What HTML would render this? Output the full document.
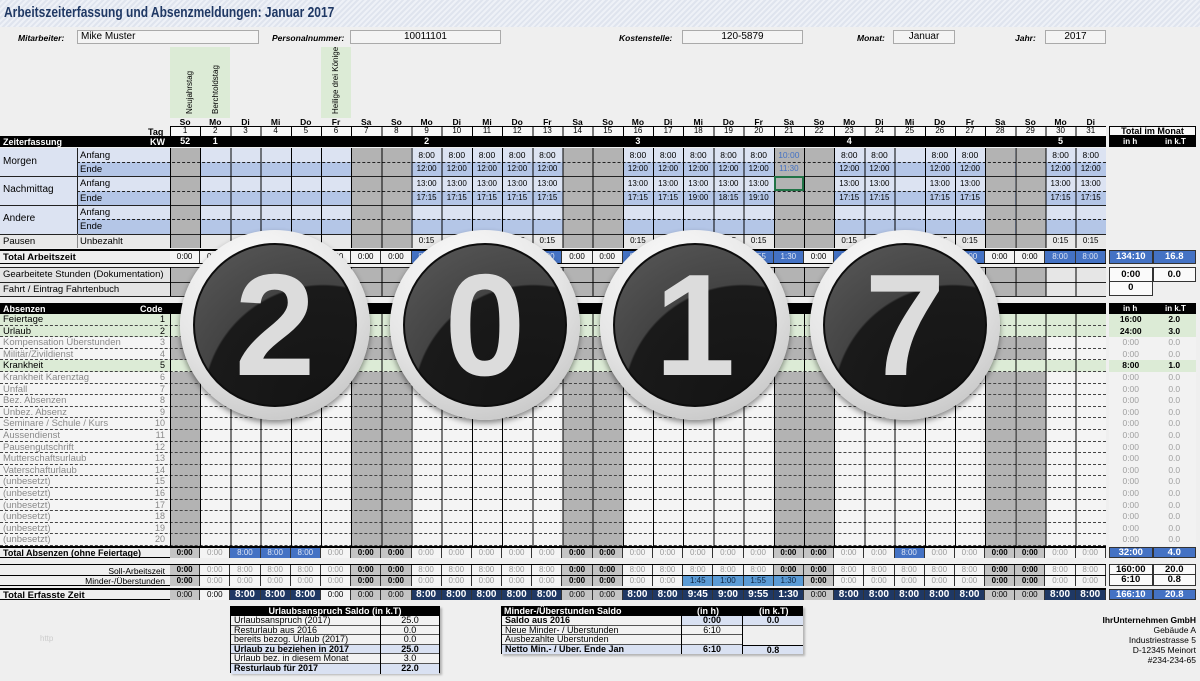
<!DOCTYPE html>
<html><head><meta charset="utf-8"><style>
*{margin:0;padding:0;box-sizing:border-box}
body{width:1200px;height:681px;background:#efefef;position:relative;overflow:hidden;font:9px "Liberation Sans",sans-serif;color:#000}
.a{position:absolute}
.row{position:absolute;left:170px;display:flex;font-size:8.5px;align-items:center}
.row span{width:30.19px;flex:none;text-align:center;height:100%;line-height:inherit}
.b{font-weight:bold}
.lab{font-style:italic;font-weight:bold;font-size:8.5px}
.box{position:absolute;background:#f4f4f4;border:1px solid #aaa;font-size:10px;line-height:12px}
.we{position:absolute;width:30.19px;background:#b3b3b3}
.grid{position:absolute;left:170px;width:936px;background:repeating-linear-gradient(90deg,#000 0,#000 1px,transparent 1px,transparent 30.19px)}
.ab{position:absolute;left:0;width:1106px;height:11.6px;border-bottom:1px dashed #444}
.ab i{position:absolute;left:3px;font-style:normal;font-size:9.5px;line-height:11px;color:#8a8a8a}
.ab em{position:absolute;left:140px;width:25px;text-align:right;font-style:normal;font-size:9px;line-height:11px;color:#8a8a8a}
.gr{background:#dcebd6}.gr i,.gr em{color:#000}
.tot span{border-right:1px solid #333}
.W{background:#c4c4c4;font-weight:bold}
.L{background:#f4f4f4;color:#9a9a9a}
.B{background:#4472c4;color:#dfe6f5}
.N{background:#1f3864;color:#fff;font-weight:bold;font-size:10px}
.M{background:#5b9bd5;color:#10243f}
.rt{position:absolute;display:flex;font-size:9.5px;font-weight:bold}
.rt span{width:43.5px;text-align:center;border:1px solid #333}
.badge{position:absolute;width:190px;height:190px;border-radius:50%;background:radial-gradient(circle at 40% 25%,#fdfdfd 0,#e6e6e6 50%,#b8b8b8 100%);box-shadow:0 3px 6px rgba(0,0,0,.45)}
.badge .in{position:absolute;left:13px;top:13px;width:164px;height:164px;border-radius:50%;border:2px solid #0d0d0d;background:radial-gradient(circle at 80% 100%,#141414 0,#1a1a1a 58%,#444 59%,#5a5a5a 100%);overflow:hidden}
.badge .d{position:absolute;left:0;top:-2px;width:160px;text-align:center;font-family:"Liberation Sans",Arial,sans-serif;font-weight:bold;font-size:145px;line-height:164px;color:#dcdcdc}
.t{position:absolute;font-size:9px;line-height:9.6px}
.t div{height:9.6px;border-bottom:1px solid #555;padding-left:3px;white-space:nowrap;overflow:hidden}
</style></head><body>

<div class="a" style="left:0;top:0;width:1200px;height:27px;background:repeating-linear-gradient(135deg,#dfe4ee 0,#dfe4ee 2px,#eef1f7 2px,#eef1f7 4px)"></div>
<div class="a" style="left:4px;top:4px;font:bold 15px 'Liberation Sans',sans-serif;color:#1f3864;transform:scaleX(0.8);transform-origin:left;white-space:nowrap">Arbeitszeiterfassung und Absenzmeldungen: Januar 2017</div>

<div class="a lab" style="left:18px;top:33px">Mitarbeiter:</div>
<div class="box" style="left:77px;top:30px;width:182px;height:14px;padding-left:3px">Mike Muster</div>
<div class="a lab" style="left:272px;top:33px">Personalnummer:</div>
<div class="box" style="left:350px;top:30px;width:151px;height:14px;text-align:center">10011101</div>
<div class="a lab" style="left:619px;top:33px">Kostenstelle:</div>
<div class="box" style="left:682px;top:30px;width:121px;height:14px;text-align:center">120-5879</div>
<div class="a lab" style="left:857px;top:33px">Monat:</div>
<div class="box" style="left:893px;top:30px;width:62px;height:14px;text-align:center">Januar</div>
<div class="a lab" style="left:1015px;top:33px">Jahr:</div>
<div class="box" style="left:1045px;top:30px;width:61px;height:14px;text-align:center">2017</div>

<div class="a" style="left:170px;top:47px;width:60px;height:71px;background:#dcebd6"></div>
<div class="a" style="left:321px;top:47px;width:30px;height:71px;background:#dcebd6"></div>
<div class="a" style="left:185px;top:114px;transform:rotate(-90deg);transform-origin:left top;font-size:8px;white-space:nowrap;width:60px">Neujahrstag</div>
<div class="a" style="left:211px;top:114px;transform:rotate(-90deg);transform-origin:left top;font-size:8px;white-space:nowrap;width:60px">Berchtoldstag</div>
<div class="a" style="left:331px;top:114px;transform:rotate(-90deg);transform-origin:left top;font-size:8px;white-space:nowrap;width:70px">Heilige drei Könige</div>

<div class="row b" style="top:118px;height:9px;line-height:9px"><span>So</span><span>Mo</span><span>Di</span><span>Mi</span><span>Do</span><span>Fr</span><span>Sa</span><span>So</span><span>Mo</span><span>Di</span><span>Mi</span><span>Do</span><span>Fr</span><span>Sa</span><span>So</span><span>Mo</span><span>Di</span><span>Mi</span><span>Do</span><span>Fr</span><span>Sa</span><span>So</span><span>Mo</span><span>Di</span><span>Mi</span><span>Do</span><span>Fr</span><span>Sa</span><span>So</span><span>Mo</span><span>Di</span></div>
<div class="a b" style="left:148px;top:127px;font-size:9px">Tag</div>
<div class="a" style="left:170px;top:126px;width:936px;height:10px;background:#f8f8f8;border-top:1px solid #000"></div>
<div class="grid" style="top:126px;height:10px"></div>
<div class="row" style="top:126px;height:10px;line-height:10px;font-size:8px"><span>1</span><span>2</span><span>3</span><span>4</span><span>5</span><span>6</span><span>7</span><span>8</span><span>9</span><span>10</span><span>11</span><span>12</span><span>13</span><span>14</span><span>15</span><span>16</span><span>17</span><span>18</span><span>19</span><span>20</span><span>21</span><span>22</span><span>23</span><span>24</span><span>25</span><span>26</span><span>27</span><span>28</span><span>29</span><span>30</span><span>31</span></div>

<div class="a" style="left:0;top:136px;width:1106px;height:11px;background:#000"></div>
<div class="a b" style="left:3px;top:137px;color:#fff;font-size:9px">Zeiterfassung</div>
<div class="a b" style="left:150px;top:137px;color:#fff;font-size:9px">KW</div>
<div class="row b" style="top:136px;height:11px;line-height:11px;color:#fff;font-size:9px"><span>52</span><span>1</span><span></span><span></span><span></span><span></span><span></span><span></span><span>2</span><span></span><span></span><span></span><span></span><span></span><span></span><span>3</span><span></span><span></span><span></span><span></span><span></span><span></span><span>4</span><span></span><span></span><span></span><span></span><span></span><span></span><span>5</span><span></span></div>

<div class="a" style="left:0;top:148px;width:77px;height:86px;background:#dce3f2"></div>
<div class="a" style="left:77px;top:148px;width:1029px;height:14px;background:#dce3f2"></div>
<div class="a" style="left:77px;top:162px;width:1029px;height:14px;background:#b4c6e7"></div>
<div class="a" style="left:77px;top:176px;width:1029px;height:15px;background:#dce3f2"></div>
<div class="a" style="left:77px;top:191px;width:1029px;height:14px;background:#b4c6e7"></div>
<div class="a" style="left:77px;top:205px;width:1029px;height:14px;background:#dce3f2"></div>
<div class="a" style="left:77px;top:219px;width:1029px;height:15px;background:#b4c6e7"></div>
<div class="a" style="left:0;top:234px;width:1106px;height:14px;background:#e8e8e8"></div>
<div class="a" style="left:0;top:249px;width:1106px;height:15px;background:#efefef;border-top:2px solid #000;border-bottom:1px solid #000"></div>
<div class="a" style="left:0;top:267px;width:170px;height:29px;background:#e4e4e4"></div>
<div class="a" style="left:170px;top:267px;width:936px;height:29px;background:#d0d0d0"></div>
<div class="a" style="left:1045px;top:267px;width:61px;height:29px;background:#e6e6e6"></div>

<div class="we" style="left:170px;top:148px;height:100px"></div>
<div class="we" style="left:351.1px;top:148px;height:100px"></div>
<div class="we" style="left:381.3px;top:148px;height:100px"></div>
<div class="we" style="left:562.5px;top:148px;height:100px"></div>
<div class="we" style="left:592.7px;top:148px;height:100px"></div>
<div class="we" style="left:773.8px;top:148px;height:100px"></div>
<div class="we" style="left:804px;top:148px;height:100px"></div>
<div class="we" style="left:985.3px;top:148px;height:100px"></div>
<div class="we" style="left:1015.5px;top:148px;height:100px"></div>
<div class="we" style="left:170px;top:267px;height:29px"></div>
<div class="we" style="left:351.1px;top:267px;height:29px"></div>
<div class="we" style="left:381.3px;top:267px;height:29px"></div>
<div class="we" style="left:562.5px;top:267px;height:29px"></div>
<div class="we" style="left:592.7px;top:267px;height:29px"></div>
<div class="we" style="left:773.8px;top:267px;height:29px"></div>
<div class="we" style="left:804px;top:267px;height:29px"></div>
<div class="we" style="left:985.3px;top:267px;height:29px"></div>
<div class="we" style="left:1015.5px;top:267px;height:29px"></div>

<div class="a" style="left:77px;top:162px;width:1029px;border-top:1px dashed #222"></div>
<div class="a" style="left:0;top:176px;width:1106px;border-top:1px solid #222"></div>
<div class="a" style="left:77px;top:191px;width:1029px;border-top:1px dashed #222"></div>
<div class="a" style="left:0;top:205px;width:1106px;border-top:1px solid #222"></div>
<div class="a" style="left:77px;top:219px;width:1029px;border-top:1px dashed #222"></div>
<div class="a" style="left:0;top:234px;width:1106px;border-top:1px solid #222"></div>
<div class="a" style="left:0;top:282px;width:1106px;border-top:1px solid #222"></div>
<div class="a" style="left:0;top:267px;width:1106px;border-top:1px solid #222"></div>
<div class="a" style="left:0;top:296px;width:1106px;border-top:1px solid #222"></div>
<div class="a" style="left:77px;top:148px;height:86px;border-left:1px solid #222"></div>
<div class="a" style="left:77px;top:234px;height:14px;border-left:1px solid #888"></div>
<div class="grid" style="top:148px;height:100px"></div>
<div class="grid" style="top:267px;height:29px"></div>

<div class="a" style="left:3px;top:156px;font-size:10px">Morgen</div>
<div class="a" style="left:3px;top:184px;font-size:10px">Nachmittag</div>
<div class="a" style="left:3px;top:213px;font-size:10px">Andere</div>
<div class="a" style="left:80px;top:150px;font-size:9.5px">Anfang</div>
<div class="a" style="left:80px;top:164px;font-size:9.5px">Ende</div>
<div class="a" style="left:80px;top:178px;font-size:9.5px">Anfang</div>
<div class="a" style="left:80px;top:193px;font-size:9.5px">Ende</div>
<div class="a" style="left:80px;top:207px;font-size:9.5px">Anfang</div>
<div class="a" style="left:80px;top:221px;font-size:9.5px">Ende</div>
<div class="a" style="left:3px;top:236px;font-size:9.5px">Pausen</div>
<div class="a" style="left:80px;top:236px;font-size:9.5px">Unbezahlt</div>
<div class="a b" style="left:3px;top:252px;font-size:9.5px">Total Arbeitszeit</div>
<div class="a" style="left:3px;top:269px;font-size:9.5px">Gearbeitete Stunden (Dokumentation)</div>
<div class="a" style="left:3px;top:284px;font-size:9.5px">Fahrt / Eintrag Fahrtenbuch</div>

<div class="row" style="top:148px;height:14px;line-height:14px"><span></span><span></span><span></span><span></span><span></span><span></span><span></span><span></span><span>8:00</span><span>8:00</span><span>8:00</span><span>8:00</span><span>8:00</span><span></span><span></span><span>8:00</span><span>8:00</span><span>8:00</span><span>8:00</span><span>8:00</span><span style="color:#4472c4">10:00</span><span></span><span>8:00</span><span>8:00</span><span></span><span>8:00</span><span>8:00</span><span></span><span></span><span>8:00</span><span>8:00</span></div>
<div class="row" style="top:162px;height:14px;line-height:14px;font-size:8px"><span></span><span></span><span></span><span></span><span></span><span></span><span></span><span></span><span>12:00</span><span>12:00</span><span>12:00</span><span>12:00</span><span>12:00</span><span></span><span></span><span>12:00</span><span>12:00</span><span>12:00</span><span>12:00</span><span>12:00</span><span style="color:#4472c4">11:30</span><span></span><span>12:00</span><span>12:00</span><span></span><span>12:00</span><span>12:00</span><span></span><span></span><span>12:00</span><span>12:00</span></div>
<div class="row" style="top:176px;height:15px;line-height:15px;font-size:8px"><span></span><span></span><span></span><span></span><span></span><span></span><span></span><span></span><span>13:00</span><span>13:00</span><span>13:00</span><span>13:00</span><span>13:00</span><span></span><span></span><span>13:00</span><span>13:00</span><span>13:00</span><span>13:00</span><span>13:00</span><span style="border:2px solid #217346"></span><span></span><span>13:00</span><span>13:00</span><span></span><span>13:00</span><span>13:00</span><span></span><span></span><span>13:00</span><span>13:00</span></div>
<div class="row" style="top:191px;height:14px;line-height:14px;font-size:8px"><span></span><span></span><span></span><span></span><span></span><span></span><span></span><span></span><span>17:15</span><span>17:15</span><span>17:15</span><span>17:15</span><span>17:15</span><span></span><span></span><span>17:15</span><span>17:15</span><span>19:00</span><span>18:15</span><span>19:10</span><span></span><span></span><span>17:15</span><span>17:15</span><span></span><span>17:15</span><span>17:15</span><span></span><span></span><span>17:15</span><span>17:15</span></div>
<div class="row" style="top:234px;height:14px;line-height:14px;font-size:8px"><span></span><span></span><span></span><span></span><span></span><span></span><span></span><span></span><span>0:15</span><span>0:15</span><span>0:15</span><span>0:15</span><span>0:15</span><span></span><span></span><span>0:15</span><span>0:15</span><span>0:15</span><span>0:15</span><span>0:15</span><span></span><span></span><span>0:15</span><span>0:15</span><span></span><span>0:15</span><span>0:15</span><span></span><span></span><span>0:15</span><span>0:15</span></div>
<div class="row tot" style="top:251px;height:12px;line-height:12px;font-size:8px"><span class="L" style="color:#000">0:00</span><span class="L" style="color:#000">0:00</span><span class="L" style="color:#000">0:00</span><span class="L" style="color:#000">0:00</span><span class="L" style="color:#000">0:00</span><span class="L" style="color:#000">0:00</span><span class="L" style="color:#000">0:00</span><span class="L" style="color:#000">0:00</span><span class="B">8:00</span><span class="B">8:00</span><span class="B">8:00</span><span class="B">8:00</span><span class="B">8:00</span><span class="L" style="color:#000">0:00</span><span class="L" style="color:#000">0:00</span><span class="B">8:00</span><span class="B">8:00</span><span class="B">9:45</span><span class="B">9:00</span><span class="B">9:55</span><span class="B">1:30</span><span class="L" style="color:#000">0:00</span><span class="B">8:00</span><span class="B">8:00</span><span class="L" style="color:#000">0:00</span><span class="B">8:00</span><span class="B">8:00</span><span class="L" style="color:#000">0:00</span><span class="L" style="color:#000">0:00</span><span class="B">8:00</span><span class="B">8:00</span></div>

<div class="a" style="left:0;top:303px;width:1106px;height:11px;background:#000"></div>
<div class="a b" style="left:3px;top:304px;color:#fff;font-size:9px">Absenzen</div>
<div class="a b" style="left:140px;top:304px;color:#fff;font-size:9px">Code</div>
<div class="a" style="left:0;top:314px;width:1106px;height:232px;background:#f4f4f4"></div>
<div class="we" style="left:170px;top:314px;height:232px"></div>
<div class="we" style="left:351.1px;top:314px;height:232px"></div>
<div class="we" style="left:381.3px;top:314px;height:232px"></div>
<div class="we" style="left:562.5px;top:314px;height:232px"></div>
<div class="we" style="left:592.7px;top:314px;height:232px"></div>
<div class="we" style="left:773.8px;top:314px;height:232px"></div>
<div class="we" style="left:804px;top:314px;height:232px"></div>
<div class="we" style="left:985.3px;top:314px;height:232px"></div>
<div class="we" style="left:1015.5px;top:314px;height:232px"></div>
<div class="ab gr" style="top:314px"><i>Feiertage</i><em>1</em></div>
<div class="ab gr" style="top:325.6px"><i>Urlaub</i><em>2</em></div>
<div class="ab" style="top:337.2px"><i>Kompensation Überstunden</i><em>3</em></div>
<div class="ab" style="top:348.8px"><i>Militär/Zivildienst</i><em>4</em></div>
<div class="ab gr" style="top:360.4px"><i>Krankheit</i><em>5</em></div>
<div class="ab" style="top:372px"><i>Krankheit Karenztag</i><em>6</em></div>
<div class="ab" style="top:383.6px"><i>Unfall</i><em>7</em></div>
<div class="ab" style="top:395.2px"><i>Bez. Absenzen</i><em>8</em></div>
<div class="ab" style="top:406.8px"><i>Unbez. Absenz</i><em>9</em></div>
<div class="ab" style="top:418.4px"><i>Seminare / Schule / Kurs</i><em>10</em></div>
<div class="ab" style="top:430px"><i>Aussendienst</i><em>11</em></div>
<div class="ab" style="top:441.6px"><i>Pausengutschrift</i><em>12</em></div>
<div class="ab" style="top:453.2px"><i>Mutterschaftsurlaub</i><em>13</em></div>
<div class="ab" style="top:464.8px"><i>Vaterschafturlaub</i><em>14</em></div>
<div class="ab" style="top:476.4px"><i>(unbesetzt)</i><em>15</em></div>
<div class="ab" style="top:488px"><i>(unbesetzt)</i><em>16</em></div>
<div class="ab" style="top:499.6px"><i>(unbesetzt)</i><em>17</em></div>
<div class="ab" style="top:511.2px"><i>(unbesetzt)</i><em>18</em></div>
<div class="ab" style="top:522.8px"><i>(unbesetzt)</i><em>19</em></div>
<div class="ab" style="top:534.4px"><i>(unbesetzt)</i><em>20</em></div>
<div class="grid" style="top:314px;height:232px"></div>

<div class="a" style="left:0;top:546px;width:1106px;height:12px;border-top:2px solid #000;border-bottom:1px solid #000"></div>
<div class="a b" style="left:3px;top:548px;font-size:9px">Total Absenzen (ohne Feiertage)</div>
<div class="row tot" style="top:548px;height:10px;line-height:10px;font-size:8px"><span class="W">0:00</span><span class="L">0:00</span><span class="B">8:00</span><span class="B">8:00</span><span class="B">8:00</span><span class="L">0:00</span><span class="W">0:00</span><span class="W">0:00</span><span class="L">0:00</span><span class="L">0:00</span><span class="L">0:00</span><span class="L">0:00</span><span class="L">0:00</span><span class="W">0:00</span><span class="W">0:00</span><span class="L">0:00</span><span class="L">0:00</span><span class="L">0:00</span><span class="L">0:00</span><span class="L">0:00</span><span class="W">0:00</span><span class="W">0:00</span><span class="L">0:00</span><span class="L">0:00</span><span class="B">8:00</span><span class="L">0:00</span><span class="L">0:00</span><span class="W">0:00</span><span class="W">0:00</span><span class="L">0:00</span><span class="L">0:00</span></div>

<div class="a" style="left:0;top:564px;width:1106px;height:22px;border-top:1px solid #000;border-bottom:1px solid #000"></div>
<div class="a" style="left:0;top:575px;width:1106px;border-top:1px solid #000"></div>
<div class="a" style="left:0;top:566px;width:165px;text-align:right;font-size:8.5px">Soll-Arbeitszeit</div>
<div class="a" style="left:0;top:576px;width:165px;text-align:right;font-size:8.5px">Minder-/Überstunden</div>
<div class="row tot" style="top:565px;height:10px;line-height:10px;font-size:8px"><span class="W">0:00</span><span class="L">0:00</span><span class="L">8:00</span><span class="L">8:00</span><span class="L">8:00</span><span class="L">0:00</span><span class="W">0:00</span><span class="W">0:00</span><span class="L">8:00</span><span class="L">8:00</span><span class="L">8:00</span><span class="L">8:00</span><span class="L">8:00</span><span class="W">0:00</span><span class="W">0:00</span><span class="L">8:00</span><span class="L">8:00</span><span class="L">8:00</span><span class="L">8:00</span><span class="L">8:00</span><span class="W">0:00</span><span class="W">0:00</span><span class="L">8:00</span><span class="L">8:00</span><span class="L">8:00</span><span class="L">8:00</span><span class="L">8:00</span><span class="W">0:00</span><span class="W">0:00</span><span class="L">8:00</span><span class="L">8:00</span></div>
<div class="row tot" style="top:576px;height:10px;line-height:10px;font-size:8px"><span class="W">0:00</span><span class="L">0:00</span><span class="L">0:00</span><span class="L">0:00</span><span class="L">0:00</span><span class="L">0:00</span><span class="W">0:00</span><span class="W">0:00</span><span class="L">0:00</span><span class="L">0:00</span><span class="L">0:00</span><span class="L">0:00</span><span class="L">0:00</span><span class="W">0:00</span><span class="W">0:00</span><span class="L">0:00</span><span class="L">0:00</span><span class="M">1:45</span><span class="M">1:00</span><span class="M">1:55</span><span class="M">1:30</span><span class="W">0:00</span><span class="L">0:00</span><span class="L">0:00</span><span class="L">0:00</span><span class="L">0:00</span><span class="L">0:00</span><span class="W">0:00</span><span class="W">0:00</span><span class="L">0:00</span><span class="L">0:00</span></div>

<div class="a" style="left:0;top:588px;width:1106px;height:12px;border-top:2px solid #000;border-bottom:1px solid #000"></div>
<div class="a b" style="left:3px;top:590px;font-size:9.5px">Total Erfasste Zeit</div>
<div class="row tot" style="top:590px;height:10px;line-height:10px;font-size:8px"><span class="W" style="font-weight:normal">0:00</span><span class="L" style="color:#000">0:00</span><span class="N">8:00</span><span class="N">8:00</span><span class="N">8:00</span><span class="L" style="color:#000">0:00</span><span class="W" style="font-weight:normal">0:00</span><span class="W" style="font-weight:normal">0:00</span><span class="N">8:00</span><span class="N">8:00</span><span class="N">8:00</span><span class="N">8:00</span><span class="N">8:00</span><span class="W" style="font-weight:normal">0:00</span><span class="W" style="font-weight:normal">0:00</span><span class="N">8:00</span><span class="N">8:00</span><span class="N">9:45</span><span class="N">9:00</span><span class="N">9:55</span><span class="N">1:30</span><span class="W" style="font-weight:normal">0:00</span><span class="N">8:00</span><span class="N">8:00</span><span class="N">8:00</span><span class="N">8:00</span><span class="N">8:00</span><span class="W" style="font-weight:normal">0:00</span><span class="W" style="font-weight:normal">0:00</span><span class="N">8:00</span><span class="N">8:00</span></div>

<div class="a b" style="left:1109px;top:126px;width:87px;height:10px;border:1px solid #000;background:#f8f8f8;text-align:center;font-size:9px;line-height:9px">Total im Monat</div>
<div class="a b" style="left:1109px;top:136px;width:87px;height:11px;background:#000;color:#fff;font-size:8px;line-height:11px"><span style="position:absolute;left:14px">in h</span><span style="position:absolute;left:56px">in k.T</span></div>
<div class="rt" style="left:1109px;top:250px;height:14px;line-height:12px"><span class="B" style="color:#fff">134:10</span><span class="B" style="color:#fff">16.8</span></div>
<div class="rt" style="left:1109px;top:267px;height:15px;line-height:13px;background:#fafafa"><span>0:00</span><span>0.0</span></div>
<div class="rt" style="left:1109px;top:282px;height:14px;line-height:12px;background:#fafafa"><span style="border-top:none">0</span></div>
<div class="a b" style="left:1109px;top:303px;width:87px;height:11px;background:#000;color:#fff;font-size:8px;line-height:11px"><span style="position:absolute;left:14px">in h</span><span style="position:absolute;left:56px">in k.T</span></div>
<div class="a" style="left:1109px;top:314px;width:87px;height:232px;background:#f2f2f2;color:#a0a0a0;font-size:8.5px;line-height:11.6px;text-align:center">
<div style="display:flex;color:#000;font-weight:bold;background:#dcebd6"><span style="width:43.5px">16:00</span><span style="width:43.5px">2.0</span></div>
<div style="display:flex;color:#000;font-weight:bold;background:#dcebd6"><span style="width:43.5px">24:00</span><span style="width:43.5px">3.0</span></div>
<div style="display:flex"><span style="width:43.5px">0:00</span><span style="width:43.5px">0.0</span></div>
<div style="display:flex"><span style="width:43.5px">0:00</span><span style="width:43.5px">0.0</span></div>
<div style="display:flex;color:#000;font-weight:bold;background:#dcebd6"><span style="width:43.5px">8:00</span><span style="width:43.5px">1.0</span></div>
<div style="display:flex"><span style="width:43.5px">0:00</span><span style="width:43.5px">0.0</span></div>
<div style="display:flex"><span style="width:43.5px">0:00</span><span style="width:43.5px">0.0</span></div>
<div style="display:flex"><span style="width:43.5px">0:00</span><span style="width:43.5px">0.0</span></div>
<div style="display:flex"><span style="width:43.5px">0:00</span><span style="width:43.5px">0.0</span></div>
<div style="display:flex"><span style="width:43.5px">0:00</span><span style="width:43.5px">0.0</span></div>
<div style="display:flex"><span style="width:43.5px">0:00</span><span style="width:43.5px">0.0</span></div>
<div style="display:flex"><span style="width:43.5px">0:00</span><span style="width:43.5px">0.0</span></div>
<div style="display:flex"><span style="width:43.5px">0:00</span><span style="width:43.5px">0.0</span></div>
<div style="display:flex"><span style="width:43.5px">0:00</span><span style="width:43.5px">0.0</span></div>
<div style="display:flex"><span style="width:43.5px">0:00</span><span style="width:43.5px">0.0</span></div>
<div style="display:flex"><span style="width:43.5px">0:00</span><span style="width:43.5px">0.0</span></div>
<div style="display:flex"><span style="width:43.5px">0:00</span><span style="width:43.5px">0.0</span></div>
<div style="display:flex"><span style="width:43.5px">0:00</span><span style="width:43.5px">0.0</span></div>
<div style="display:flex"><span style="width:43.5px">0:00</span><span style="width:43.5px">0.0</span></div>
<div style="display:flex"><span style="width:43.5px">0:00</span><span style="width:43.5px">0.0</span></div>
</div>
<div class="rt" style="left:1109px;top:547px;height:11px;line-height:9px"><span class="B" style="color:#fff">32:00</span><span class="B" style="color:#fff">4.0</span></div>
<div class="rt" style="left:1109px;top:564px;height:11px;line-height:9px;background:#fafafa"><span>160:00</span><span>20.0</span></div>
<div class="rt" style="left:1109px;top:575px;height:11px;line-height:9px;background:#fafafa"><span style="border-top:none">6:10</span><span style="border-top:none">0.8</span></div>
<div class="rt" style="left:1109px;top:589px;height:11px;line-height:9px"><span class="B" style="color:#fff">166:10</span><span class="B" style="color:#fff">20.8</span></div>

<div class="a" style="left:230px;top:606px;width:210px;height:67px;border:1px solid #000;background:#f2f2f2;box-shadow:2px 2px 2px rgba(0,0,0,.25)"></div>
<div class="a b" style="left:230px;top:606px;width:210px;height:10px;background:#000;color:#fff;text-align:center;font-size:9px;line-height:10px">Urlaubsanspruch Saldo (in k.T)</div>
<div class="t" style="left:231px;top:616px;width:150px;border-right:1px solid #000">
<div>Urlaubsanspruch (2017)</div><div>Resturlaub aus 2016</div><div>bereits bezog. Urlaub (2017)</div><div class="b" style="background:#d9e1f2">Urlaub zu beziehen in 2017</div><div>Urlaub bez. in diesem Monat</div><div class="b" style="background:#d9e1f2;border:none">Resturlaub für 2017</div></div>
<div class="t" style="left:381px;top:616px;width:58px;text-align:center">
<div style="padding:0">25.0</div><div style="padding:0">0.0</div><div style="padding:0">0.0</div><div class="b" style="padding:0;background:#d9e1f2">25.0</div><div style="padding:0">3.0</div><div class="b" style="padding:0;background:#d9e1f2;border:none">22.0</div></div>

<div class="a" style="left:501px;top:606px;width:302px;height:48px;border:1px solid #000;background:#f2f2f2;box-shadow:2px 2px 2px rgba(0,0,0,.25)"></div>
<div class="a b" style="left:501px;top:606px;width:302px;height:10px;background:#000;color:#fff;font-size:9px;line-height:10px"><span style="position:absolute;left:3px">Minder-/Überstunden Saldo</span><span style="position:absolute;left:196px">(in h)</span><span style="position:absolute;left:258px">(in k.T)</span></div>
<div class="t" style="left:502px;top:616px;width:180px;border-right:1px solid #000">
<div class="b">Saldo aus 2016</div><div>Neue Minder- / Überstunden</div><div>Ausbezahlte Überstunden</div><div class="b" style="background:#d9e1f2;border:none">Netto Min.- / Über. Ende Jan</div></div>
<div class="t" style="left:682px;top:616px;width:61px;text-align:center;border-right:1px solid #000">
<div class="b" style="padding:0;background:#d9e1f2">0:00</div><div style="padding:0">6:10</div><div style="padding:0">&nbsp;</div><div class="b" style="padding:0;background:#d9e1f2;border:none">6:10</div></div>
<div class="t" style="left:743px;top:616px;width:60px;text-align:center">
<div class="b" style="padding:0;background:#d9e1f2">0.0</div><div style="padding:0;border:none;background:#efefef">&nbsp;</div><div style="padding:0;border:none;background:#efefef">&nbsp;</div><div class="b" style="padding:0;background:#d9e1f2;border-top:1px solid #000;border-bottom:none">0.8</div></div>

<div class="a" style="left:40px;top:634px;color:#ccc;font-size:8px">http</div>

<div class="a" style="right:4px;top:615px;text-align:right;font-size:8.5px;line-height:10px">
<div class="b">IhrUnternehmen GmbH</div><div>Gebäude A</div><div>Industriestrasse 5</div><div>D-12345 Meinort</div><div>#234-234-65</div></div>

<div class="badge" style="left:180px;top:230px"><div class="in"><div class="d">2</div></div></div>
<div class="badge" style="left:390px;top:230px"><div class="in"><div class="d">0</div></div></div>
<div class="badge" style="left:600px;top:230px"><div class="in"><div class="d">1</div></div></div>
<div class="badge" style="left:810px;top:230px"><div class="in"><div class="d">7</div></div></div>

</body></html>
